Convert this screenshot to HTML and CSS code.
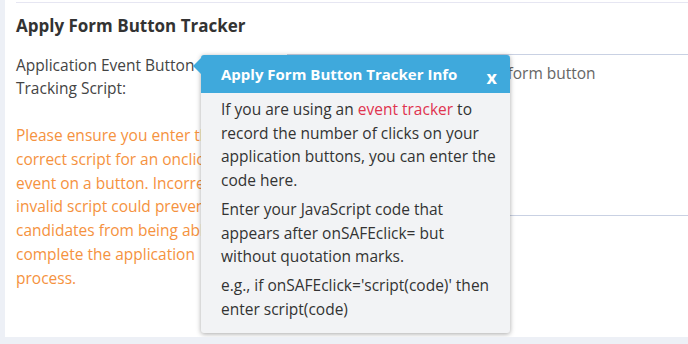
FILE: index.html
```
<!DOCTYPE html>
<html lang="en">

<head>
    <meta charset="UTF-8">
    <meta name="viewport" content="width=device-width, initial-scale=1.0">
    <title>Apply Form Button Tracker</title>
    <link rel="stylesheet" href="styles.css">
</head>

<body>

    <div class="card">
        <div class="section">
            <h2 class="title">Apply Form Button Tracker</h2>

            <div class="row">
                <div class="label-col">
                    <div class="label">Application Event Button Tracking Script:</div>
                    <p class="warning">Please ensure you enter the<br>correct script for an onclick<br>event on a button. Incorrect or<br>invalid script could prevent<br>candidates from being able to<br>complete the application<br>process.</p>
                </div>
                <div class="field">Enter the script for the apply form button</div>
            </div>
        </div>

        <div class="popover">
            <div class="pop-head">
                <span>Apply Form Button Tracker Info</span>
                <span class="close">x</span>
            </div>
            <div class="pop-body">
                <p>If you are using an <a href="#">event tracker</a> to<br>record the number of clicks on your<br>application buttons, you can enter the<br>code here.</p>
                <p>Enter your JavaScript code that<br>appears after onSAFEclick= but<br>without quotation marks.</p>
                <p>e.g., if onSAFEclick='script(code)' then<br>enter script(code)</p>
            </div>
        </div>
    </div>

</body>

</html>
```

FILE: styles.css
```
* {
    margin: 0;
    padding: 0;
    box-sizing: border-box;
}

body {
    background-color: #edf0f6;
    font-family: "Open Sans", "Liberation Sans", sans-serif;
    font-size: 15.5px;
    overflow: hidden;
}

.card {
    position: relative;
    margin-left: 5px;
    height: 337px;
    background-color: white;
    padding-top: 2px;
}

.section {
    margin-left: 11px;
    border-top: 1px solid #e6e6f2;
    padding-top: 11px;
}

.title {
    font-size: 17px;
    line-height: 24px;
    font-weight: bold;
    color: #333;
}

.row {
    display: flex;
    margin-top: 16px;
}

.label-col {
    width: 271px;
    flex-shrink: 0;
}

.label {
    color: #444;
    line-height: 23px;
    width: 200px;
}

.warning {
    color: #f5923e;
    line-height: 23.8px;
    margin-top: 24px;
    white-space: nowrap;
}

.field {
    flex: 1;
    height: 162px;
    border-top: 1px solid #c9d1e3;
    border-bottom: 1px solid #c9d1e3;
    color: #666;
    padding: 6px 10px;
    line-height: 24px;
    white-space: nowrap;
}

.popover {
    position: absolute;
    left: 196px;
    top: 55px;
    width: 309px;
    background-color: #f2f3f5;
    border-radius: 3px;
    box-shadow: 0 1px 5px rgba(0, 0, 0, 0.35);
}

.popover::before {
    content: "";
    position: absolute;
    left: -8px;
    top: 3px;
    border-top: 8px solid transparent;
    border-bottom: 8px solid transparent;
    border-right: 8px solid #3fa9dc;
}

.pop-head {
    display: flex;
    justify-content: space-between;
    align-items: center;
    height: 38px;
    padding: 0 13px 0 20px;
    background-color: #3fa9dc;
    color: white;
    font-size: 15px;
    font-weight: bold;
    border-radius: 3px 3px 0 0;
}

.close {
    font-size: 18px;
    margin-top: 5px;
}

.pop-body {
    padding: 5px 10px 12px 20px;
    color: #333;
    line-height: 23.7px;
    white-space: nowrap;
}

.pop-body p + p {
    margin-top: 5px;
}

.pop-body a {
    color: #e0344f;
    text-decoration: none;
}
```
